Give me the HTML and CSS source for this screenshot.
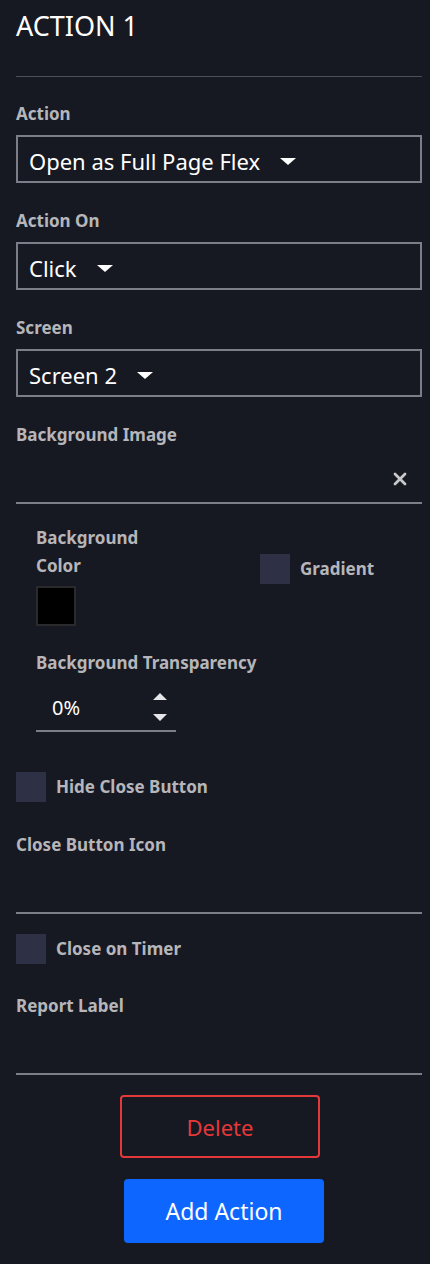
FILE: index.html
```html
<!DOCTYPE html>
<html>
<head>
<meta charset="utf-8">
<link rel="stylesheet" href="styles.css">
</head>
<body>
<div class="panel">
  <h1 class="title">ACTION 1</h1>
  <div class="divider"></div>

  <div class="field">
    <div class="label">Action</div>
    <div class="select"><span>Open as Full Page Flex</span><span class="caret"></span></div>
  </div>
  <div class="field">
    <div class="label">Action On</div>
    <div class="select"><span>Click</span><span class="caret"></span></div>
  </div>
  <div class="field">
    <div class="label">Screen</div>
    <div class="select"><span>Screen 2</span><span class="caret"></span></div>
  </div>

  <div class="label">Background Image</div>
  <div class="line-input">
    <svg class="clear" width="14" height="14" viewBox="0 0 14 14"><path d="M2 2 L12 12 M12 2 L2 12" stroke="#c8c8cc" stroke-width="2.8" stroke-linecap="round"/></svg>
  </div>

  <div class="indent">
    <div class="color-row">
      <div class="color-col">
        <div class="label tall">Background<br>Color</div>
        <div class="swatch"></div>
      </div>
      <div class="check-row gradient">
        <span class="box"></span><span class="label">Gradient</span>
      </div>
    </div>
    <div class="label transp">Background Transparency</div>
    <div class="number">
      <span class="num">0%</span>
      <span class="spin">
        <svg width="14" height="30" viewBox="0 0 14 30"><path d="M7 1 L14 8 L0 8 Z M0 22 L14 22 L7 29 Z" fill="#e6e6ea"/></svg>
      </span>
    </div>
  </div>

  <div class="check-row hide">
    <span class="box"></span><span class="label">Hide Close Button</span>
  </div>

  <div class="label sec">Close Button Icon</div>
  <div class="line-input"></div>

  <div class="check-row timer">
    <span class="box"></span><span class="label">Close on Timer</span>
  </div>

  <div class="label sec2">Report Label</div>
  <div class="line-input last"></div>

  <div class="buttons">
    <button class="btn delete">Delete</button>
    <button class="btn add">Add Action</button>
  </div>
</div>
</body>
</html>
```

FILE: styles.css
```css
html, body {
  margin: 0;
  padding: 0;
  background: #171922;
}
body {
  font-family: "Noto Sans", "Open Sans", sans-serif;
  color: #ffffff;
}
.panel {
  padding: 0 8px 0 16px;
  width: 406px;
}
.title {
  margin: 0;
  padding-top: 8px;
  font-size: 27px;
  line-height: 36px;
  font-weight: 400;
  color: #ffffff;
}
.divider {
  margin-top: 32px;
  height: 1px;
  background: #4d505c;
  margin-bottom: 26px;
}
.label {
  font-size: 17px;
  line-height: 22px;
  font-weight: 700;
  color: #b6b6ba;
}
.field .label {
  margin-bottom: 10px;
}
.field {
  margin-bottom: 27px;
}
.select {
  box-sizing: border-box;
  height: 48px;
  border: 2px solid #7b7d89;
  display: flex;
  align-items: center;
  padding-left: 11px;
  padding-top: 4px;
  font-size: 22px;
  color: #ffffff;
}
.caret {
  width: 0;
  height: 0;
  border-left: 8px solid transparent;
  border-right: 8px solid transparent;
  border-top: 7px solid #ffffff;
  margin-left: 20px;
  margin-top: 0;
}
.line-input {
  box-sizing: border-box;
  margin-top: 10px;
  height: 48px;
  border-bottom: 2px solid #7b7d89;
  display: flex;
  align-items: center;
  justify-content: flex-end;
  padding-right: 15px;
}
.line-input .clear {
  margin-top: 0;
}
.indent {
  padding-left: 20px;
  margin-top: 20px;
}
.color-row {
  display: flex;
}
.color-col {
  width: 224px;
}
.label.tall {
  line-height: 28px;
}
.swatch {
  box-sizing: border-box;
  margin-top: 6px;
  width: 40px;
  height: 40px;
  background: #000000;
  border: 2px solid #2a2a2c;
}
.check-row {
  display: flex;
  align-items: center;
  height: 30px;
}
.box {
  width: 30px;
  height: 30px;
  background: #2e3045;
  margin-right: 10px;
  flex: none;
}
.gradient {
  margin-top: 30px;
}
.label.transp {
  margin-top: 26px;
}
.number {
  box-sizing: border-box;
  margin-top: 10px;
  width: 140px;
  height: 48px;
  border-bottom: 2px solid #7b7d89;
  display: flex;
  align-items: center;
  padding-left: 16px;
}
.num {
  font-size: 20px;
  color: #ffffff;
  flex: 1;
}
.spin {
  display: flex;
  margin-right: 9px;
}
.hide {
  margin-top: 40px;
}
.label.sec {
  margin-top: 32px;
}
.timer {
  margin-top: 20px;
}
.label.sec2 {
  margin-top: 31px;
}
.buttons {
  display: flex;
  flex-direction: column;
  align-items: flex-start;
  margin-top: 20px;
}
.btn {
  font-family: "Noto Sans", "Open Sans", sans-serif;
  font-size: 22px;
  border-radius: 4px;
  width: 200px;
  cursor: pointer;
}
.delete {
  margin-left: 104px;
  height: 63px;
  background: transparent;
  border: 2px solid #e5383b;
  color: #e5383b;
}
.add {
  margin-left: 108px;
  margin-top: 21px;
  height: 64px;
  font-size: 23px;
  background: #0d66ff;
  border: none;
  color: #ffffff;
}
```
